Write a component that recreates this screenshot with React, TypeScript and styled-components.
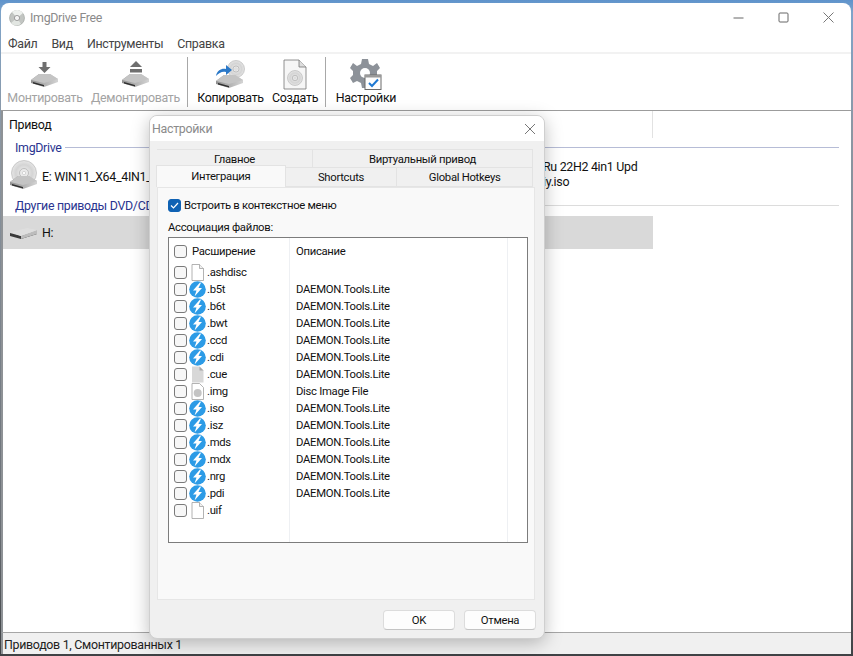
import React from "react";
import styled, { createGlobalStyle } from "styled-components";

const Global = createGlobalStyle`
  html, body { margin: 0; padding: 0; width: 853px; height: 656px; overflow: hidden; }
  body { font-family: Roboto, "Open Sans", "Liberation Sans", sans-serif; font-size: 12.4px; letter-spacing: -0.3px; color: #111; }
`;

const Desktop = styled.div`
  position: relative;
  width: 853px;
  height: 656px;
  padding: 3px 2px 2px 1px;
  box-sizing: border-box;
  background: linear-gradient(180deg, #5e93cc 0, #7fa4c9 2%, #8c97a3 20%, #6b7076 80%, #3f4245 100%);
`;
const Window = styled.div`
  height: 100%;
  display: flex;
  flex-direction: column;
  background: #fff;
  border-radius: 8px 8px 0 0;
  overflow: hidden;
`;
const TitleBar = styled.div`
  height: 29px;
  display: flex;
  align-items: center;
  padding-left: 8px;
  gap: 5px;
  color: #8b8b8b;
  flex: none;
`;
const TitleText = styled.span`
  font-size: 12.4px;
`;
const WinButtons = styled.div`
  margin-left: auto;
  display: flex;
  align-items: center;
`;
const WinButton = styled.div`
  width: 45px;
  height: 29px;
  display: flex;
  align-items: center;
  justify-content: center;
`;
const MenuBar = styled.div`
  height: 18px;
  padding: 2px 0 0 7px;
  display: flex;
  align-items: center;
  gap: 14px;
  flex: none;
  color: #444;
  border-bottom: 2px solid #f2f2f2;
`;
const Toolbar = styled.div`
  height: 56px;
  display: flex;
  align-items: stretch;
  padding-left: 2px;
  flex: none;
  border-bottom: 1px solid #9c9c9c;
`;
const ToolButton = styled.div<{ $w: number; $off?: boolean }>`
  width: ${(p) => p.$w}px;
  display: flex;
  flex-direction: column;
  align-items: center;
  justify-content: flex-end;
  padding-bottom: 5px;
  color: ${(p) => (p.$off ? "#a3a3a3" : "#111")};
  white-space: nowrap;
`;
const ToolIcon = styled.div`
  height: 32px;
  display: flex;
  align-items: center;
  justify-content: center;
`;
const ToolSep = styled.div`
  width: 1px;
  background: #a8a8a8;
  margin: 3px 5px 3px 3px;
`;
const ListArea = styled.div`
  flex: 1;
  min-height: 0;
  display: flex;
  flex-direction: column;
  border-left: 2px solid #8e9296;
  background: #fff;
`;
const ListHeader = styled.div`
  height: 27px;
  width: 650px;
  box-sizing: border-box;
  padding: 0 0 0 6px;
  display: flex;
  align-items: center;
  border-right: 1px solid #e2e2e2;
  flex: none;
`;
const GroupRow = styled.div<{ $line: string }>`
  display: flex;
  align-items: center;
  height: 18px;
  padding-left: 12px;
  margin-right: 12px;
  color: #2a3590;
  gap: 3px;
  &::after {
    content: "";
    flex: 1;
    height: 1px;
    background: ${(p) => p.$line};
  }
`;
const DriveRow = styled.div<{ $sel?: boolean; $h: number }>`
  width: 650px;
  height: ${(p) => p.$h}px;
  margin-top: ${(p) => (p.$sel ? 2 : 0)}px;
  display: flex;
  align-items: center;
  padding-left: 6px;
  box-sizing: border-box;
  gap: 3px;
  background: ${(p) => (p.$sel ? "#d9d9d9" : "transparent")};
`;
const DriveName = styled.span`
  white-space: nowrap;
  flex: none;
  width: 498px;
`;
const DriveExtra = styled.div`
  line-height: 15px;
  margin-top: -5px;
  white-space: nowrap;
`;
const StatusBar = styled.div`
  height: 22px;
  flex: none;
  background: #f0f0f0;
  border-top: 1px solid #a6a6a6;
  border-left: 2px solid #8e9296;
  padding: 1px 0 0 1px;
  box-sizing: border-box;
  display: flex;
  align-items: center;
  color: #222;
`;

const Dialog = styled.div`
  position: absolute;
  left: 149px;
  top: 115px;
  width: 396px;
  height: 524px;
  display: flex;
  flex-direction: column;
  background: #f0f0f0;
  border-radius: 8px;
  overflow: hidden;
  border: 1px solid #cfcfcf;
  box-sizing: border-box;
  box-shadow: 0 4px 18px rgba(0, 0, 0, 0.26);
  font-size: 11.3px;
`;
const DialogTitle = styled.div`
  height: 25px;
  flex: none;
  background: #fff;
  display: flex;
  align-items: center;
  padding: 0 8px 0 2px;
  color: #8b8b8b;
  justify-content: space-between;
  font-size: 12.4px;
`;
const DialogBody = styled.div`
  flex: 1;
  min-height: 0;
  display: flex;
  flex-direction: column;
  padding: 8px 9px 8px 6px;
`;
const TabRow = styled.div<{ $front?: boolean }>`
  display: flex;
  height: ${(p) => (p.$front ? 20 : 18)}px;
  padding-left: ${(p) => (p.$front ? 0 : 1)}px;
  margin-right: 2px;
  flex: none;
`;
const Tab = styled.div<{ $w: number; $active?: boolean }>`
  width: ${(p) => p.$w}px;
  box-sizing: border-box;
  display: flex;
  align-items: center;
  justify-content: center;
  background: ${(p) => (p.$active ? "#f9f9f9" : "#f0f0f0")};
  border: 1px solid #e3e3e3;
  border-bottom: ${(p) => (p.$active ? "none" : "1px solid #e3e3e3")};
  border-left-width: ${(p) => (p.$active ? 1 : 0)}px;
  position: relative;
  top: ${(p) => (p.$active ? -2 : 0)}px;
  height: ${(p) => (p.$active ? 22 : 20)}px;
  margin-bottom: -2px;
`;
const TabPanel = styled.div`
  flex: 1;
  min-height: 0;
  background: #f9f9f9;
  border: 1px solid #e6e6e6;
  margin: 0 0 0 1px;
  padding: 10px 6px 0 10px;
  display: flex;
  flex-direction: column;
`;
const CheckLine = styled.div`
  display: flex;
  align-items: center;
  gap: 3px;
  height: 15px;
`;
const Box = styled.div<{ $on?: boolean }>`
  width: 13px;
  height: 13px;
  flex: none;
  border-radius: 3px;
  border: 1px solid ${(p) => (p.$on ? "#0f62b4" : "#7a7a7a")};
  background: ${(p) => (p.$on ? "#0f62b4" : "#f7f7f7")};
  box-sizing: border-box;
  display: flex;
  align-items: center;
  justify-content: center;
`;
const FieldLabel = styled.div`
  margin-top: 7px;
  height: 16px;
  line-height: 16px;
`;
const ListBox = styled.div`
  margin-top: 1px;
  height: 306px;
  flex: none;
  box-sizing: border-box;
  background: #fff;
  border: 1px solid #7c7c7c;
  display: flex;
  flex-direction: column;
  position: relative;
`;
const ColLine = styled.div<{ $x: number }>`
  position: absolute;
  left: ${(p) => p.$x}px;
  top: 0;
  bottom: 0;
  width: 1px;
  background: #eef0f3;
`;
const HeadRow = styled.div`
  display: grid;
  grid-template-columns: 120px 1fr;
  height: 24px;
  align-items: center;
  padding-top: 1px;
  margin-bottom: 1px;
  flex: none;
`;
const ExtHead = styled.div`
  display: flex;
  align-items: center;
  gap: 5px;
  padding-left: 5px;
`;
const DescCell = styled.div`
  padding-left: 7px;
`;
const Row = styled.div`
  display: grid;
  grid-template-columns: 120px 1fr;
  height: 17px;
  align-items: center;
  flex: none;
`;
const ExtCell = styled.div`
  display: flex;
  align-items: center;
  gap: 2px;
  padding-left: 5px;
`;
const RowIcon = styled.div`
  width: 17px;
  height: 17px;
  flex: none;
  margin-right: -1px;
  display: flex;
  align-items: center;
  justify-content: center;
`;
const DialogFoot = styled.div`
  display: flex;
  justify-content: flex-end;
  gap: 9px;
  padding-top: 10px;
  margin-right: -1px;
  flex: none;
`;
const FootButton = styled.div`
  width: 72px;
  height: 20px;
  box-sizing: border-box;
  background: #fdfdfd;
  border: 1px solid #dcdcdc;
  border-bottom-color: #c4c4c4;
  border-radius: 4px;
  display: flex;
  align-items: center;
  justify-content: center;
`;

const Defs = () => (
  <svg width="0" height="0" style={{ position: "absolute" }}>
    <defs>
      <linearGradient id="slab" x1="0" y1="0" x2="1" y2="0">
        <stop offset="0" stopColor="#8f8f8f" />
        <stop offset="1" stopColor="#d4d4d4" />
      </linearGradient>
      <radialGradient id="disc" cx="0.5" cy="0.5" r="0.55">
        <stop offset="0" stopColor="#f6f6f6" />
        <stop offset="0.6" stopColor="#d4d4d4" />
        <stop offset="1" stopColor="#ececec" />
      </radialGradient>
    </defs>
  </svg>
);

const Slab = ({ y = 0 }: { y?: number }) => (
  <g transform={`translate(0 ${y})`}>
    <path d="M1 7 L9 1 H20 L28 6 V9 L14 14 L1 10 Z" fill="url(#slab)" />
    <path d="M1 7 L9 1 H20 L28 6 L14 10 Z" fill="#c4c4c4" />
    <path d="M3 9 L14 12 V13.5 L3 10.5 Z" fill="#2f2f2f" />
  </g>
);

const Disc = ({ cx, cy, r }: { cx: number; cy: number; r: number }) => (
  <g>
    <circle cx={cx} cy={cy} r={r} fill="url(#disc)" stroke="#b0b0b0" strokeWidth="0.6" />
    <circle cx={cx} cy={cy} r={r * 0.36} fill="#eaeaea" stroke="#a2a2a2" strokeWidth="0.6" />
    <circle cx={cx} cy={cy} r={r * 0.13} fill="#fff" stroke="#aaa" strokeWidth="0.4" />
  </g>
);

const MountIcon = () => (
  <svg width="30" height="28" viewBox="0 0 30 28">
    <path d="M12.5 2 H16.5 V7 H20.5 L14.5 13 L8.5 7 H12.5 Z" fill="#6f6f6f" />
    <Slab y={13} />
  </svg>
);
const EjectIcon = () => (
  <svg width="30" height="28" viewBox="0 0 30 28">
    <path d="M15 1 L21 7 H9 Z" fill="#6f6f6f" />
    <rect x="9" y="9" width="12" height="3.5" fill="#6f6f6f" />
    <Slab y={13} />
  </svg>
);
const CopyIcon = () => (
  <svg width="32" height="29" viewBox="0 0 32 29">
    <Disc cx={21} cy={9} r={8.5} />
    <Slab y={14} />
    <path d="M1 16 C2 10 7 8 11 9 V5 L17 10 L11 15 V12 C7 11 4 13 1 16 Z" fill="#2a78c8" />
  </svg>
);
const CreateIcon = () => (
  <svg width="24" height="31" viewBox="0 0 24 31">
    <path d="M1 1 H16 L23 8 V30 H1 Z" fill="#f6f6f6" stroke="#777" strokeWidth="0.8" />
    <path d="M16 1 V8 H23" fill="#ddd" stroke="#777" strokeWidth="0.8" />
    <Disc cx={12} cy={19} r={7.5} />
  </svg>
);
const SettingsIcon = () => (
  <svg width="32" height="32" viewBox="0 0 32 32">
    <path
      d="M12 1 H18 L19 6 L23 8 L27 5 L30 10 L27 13 V17 L30 20 L27 25 L23 23 L19 25 L18 30 H12 L11 25 L7 23 L3 25 L0 20 L3 17 V13 L0 10 L3 5 L7 8 L11 6 Z"
      fill="#8d9299"
    />
    <circle cx="15" cy="15" r="5" fill="#fff" />
    <rect x="15" y="17" width="16" height="14.5" fill="#fdfdfd" stroke="#6a6a6a" strokeWidth="1" />
    <rect x="15" y="17" width="16" height="2.5" fill="#9a9a9a" />
    <path d="M19 25 L22 28 L28 21.5" stroke="#1e78d2" strokeWidth="2" fill="none" />
  </svg>
);
const AppIcon = () => (
  <svg width="16" height="16" viewBox="0 0 16 16">
    <circle cx="8" cy="8" r="7.5" fill="#c2c5c2" stroke="#9aa09a" strokeWidth="0.6" />
    <path d="M8 8 L3 2 A7.5 7.5 0 0 1 14 3 Z" fill="#eef1ee" />
    <path d="M8 8 L2 13 A7.5 7.5 0 0 0 12 14 Z" fill="#e2e6e2" />
    <circle cx="8" cy="8" r="2.6" fill="#f4f4f4" stroke="#7f7f7f" strokeWidth="0.7" />
  </svg>
);
const BigDiscDrive = () => (
  <svg width="30" height="32" viewBox="0 0 30 32">
    <Disc cx={15} cy={13} r={12.5} />
    <Slab y={15} />
  </svg>
);
const FlatDrive = () => (
  <svg width="30" height="16" viewBox="0 0 30 16">
    <path d="M1 8 L12 11 L28 6 V9 L12 14 L1 11 Z" fill="#3a3a3a" />
    <path d="M12 11 L28 5 V9 L12 14 Z" fill="#bcbcbc" />
    <path d="M1 7 L18 3 L28 5 L12 11 Z" fill="#dedede" />
  </svg>
);

const FileIcon = () => (
  <svg width="13" height="17" viewBox="0 0 13 17">
    <path d="M1 .5 H8.5 L12.5 4.5 V16.5 H1 Z" fill="#fff" stroke="#a0a0a0" strokeWidth="0.8" />
    <path d="M8.5 .5 V4.5 H12.5" fill="#f0f0f0" stroke="#a0a0a0" strokeWidth="0.8" />
  </svg>
);
const GrayFileIcon = () => (
  <svg width="13" height="17" viewBox="0 0 13 17">
    <path d="M1 .5 H8.5 L12.5 4.5 V16.5 H1 Z" fill="#d8d8d8" />
    <path d="M8.5 .5 V4.5 H12.5 Z" fill="#a8a8a8" />
  </svg>
);
const ImgFileIcon = () => (
  <svg width="13" height="17" viewBox="0 0 13 17">
    <path d="M1 .5 H8.5 L12.5 4.5 V16.5 H1 Z" fill="#fff" stroke="#a0a0a0" strokeWidth="0.8" />
    <circle cx="6.7" cy="10" r="4" fill="#c4c4c4" />
  </svg>
);
const DaemonIcon = () => (
  <svg width="17" height="17" viewBox="0 0 17 17">
    <circle cx="8.5" cy="8.5" r="8.3" fill="#2c9be6" />
    <path d="M11 1.5 L4 9.5 H7.5 L5.5 15.5 L13 7 H9.5 L12 1.8 Z" fill="#fff" />
  </svg>
);

type Kind = "file" | "daemon" | "gray" | "img";
const icons: Record<Kind, React.FC> = {
  file: FileIcon,
  daemon: DaemonIcon,
  gray: GrayFileIcon,
  img: ImgFileIcon,
};

const DT = "DAEMON.Tools.Lite";
const rows: { ext: string; kind: Kind; desc: string }[] = [
  { ext: ".ashdisc", kind: "file", desc: "" },
  { ext: ".b5t", kind: "daemon", desc: DT },
  { ext: ".b6t", kind: "daemon", desc: DT },
  { ext: ".bwt", kind: "daemon", desc: DT },
  { ext: ".ccd", kind: "daemon", desc: DT },
  { ext: ".cdi", kind: "daemon", desc: DT },
  { ext: ".cue", kind: "gray", desc: DT },
  { ext: ".img", kind: "img", desc: "Disc Image File" },
  { ext: ".iso", kind: "daemon", desc: DT },
  { ext: ".isz", kind: "daemon", desc: DT },
  { ext: ".mds", kind: "daemon", desc: DT },
  { ext: ".mdx", kind: "daemon", desc: DT },
  { ext: ".nrg", kind: "daemon", desc: DT },
  { ext: ".pdi", kind: "daemon", desc: DT },
  { ext: ".uif", kind: "file", desc: "" },
];

const App: React.FC = () => {
  return (
    <Desktop>
      <Global />
      <Defs />
      <Window>
        <TitleBar>
          <AppIcon />
          <TitleText>ImgDrive Free</TitleText>
          <WinButtons>
            <WinButton>
              <svg width="11" height="11" viewBox="0 0 11 11">
                <path d="M0.5 6 H10.5" stroke="#666" strokeWidth="1" />
              </svg>
            </WinButton>
            <WinButton>
              <svg width="11" height="11" viewBox="0 0 11 11">
                <rect x="1" y="1" width="9" height="9" rx="1" fill="none" stroke="#666" strokeWidth="1" />
              </svg>
            </WinButton>
            <WinButton>
              <svg width="11" height="11" viewBox="0 0 11 11">
                <path d="M0.5 0.5 L10.5 10.5 M10.5 0.5 L0.5 10.5" stroke="#777" strokeWidth="1" />
              </svg>
            </WinButton>
          </WinButtons>
        </TitleBar>
        <MenuBar>
          <span>Файл</span>
          <span>Вид</span>
          <span>Инструменты</span>
          <span>Справка</span>
        </MenuBar>
        <Toolbar>
          <ToolButton $w={84} $off>
            <ToolIcon>
              <MountIcon />
            </ToolIcon>
            Монтировать
          </ToolButton>
          <ToolButton $w={97} $off>
            <ToolIcon>
              <EjectIcon />
            </ToolIcon>
            Демонтировать
          </ToolButton>
          <ToolSep />
          <ToolButton $w={75}>
            <ToolIcon>
              <CopyIcon />
            </ToolIcon>
            Копировать
          </ToolButton>
          <ToolButton $w={54}>
            <ToolIcon>
              <CreateIcon />
            </ToolIcon>
            Создать
          </ToolButton>
          <ToolSep />
          <ToolButton $w={70}>
            <ToolIcon>
              <SettingsIcon />
            </ToolIcon>
            Настройки
          </ToolButton>
        </Toolbar>
        <ListArea>
          <ListHeader>Привод</ListHeader>
          <GroupRow $line="#b6bcd6">ImgDrive</GroupRow>
          <DriveRow $h={40}>
            <BigDiscDrive />
            <DriveName>E: WIN11_X64_4IN1_C</DriveName>
            <DriveExtra>
              Ru 22H2 4in1 Upd
              <br />
              iy.iso
            </DriveExtra>
          </DriveRow>
          <GroupRow $line="#dcdcdc">Другие приводы DVD/CD</GroupRow>
          <DriveRow $h={33} $sel>
            <FlatDrive />
            <DriveName>H:</DriveName>
          </DriveRow>
        </ListArea>
        <StatusBar>Приводов 1, Смонтированных 1</StatusBar>
      </Window>
      <Dialog>
        <DialogTitle>
          Настройки
          <svg width="12" height="12" viewBox="0 0 12 12">
            <path d="M1 1 L11 11 M11 1 L1 11" stroke="#777" strokeWidth="1" />
          </svg>
        </DialogTitle>
        <DialogBody>
          <TabRow>
            <Tab $w={156}>Главное</Tab>
            <Tab $w={220}>Виртуальный привод</Tab>
          </TabRow>
          <TabRow $front>
            <Tab $w={130} $active>
              Интеграция
            </Tab>
            <Tab $w={112}>Shortcuts</Tab>
            <Tab $w={136}>Global Hotkeys</Tab>
          </TabRow>
          <TabPanel>
            <CheckLine>
              <Box $on>
                <svg width="9" height="9" viewBox="0 0 9 9">
                  <path d="M1 4.5 L3.5 7 L8 2" stroke="#fff" strokeWidth="1.2" fill="none" />
                </svg>
              </Box>
              Встроить в контекстное меню
            </CheckLine>
            <FieldLabel>Ассоциация файлов:</FieldLabel>
            <ListBox>
              <ColLine $x={120} />
              <ColLine $x={338} />
              <HeadRow>
                <ExtHead>
                  <Box />
                  Расширение
                </ExtHead>
                <DescCell>Описание</DescCell>
              </HeadRow>
              {rows.map((r) => {
                const Icon = icons[r.kind];
                return (
                  <Row key={r.ext}>
                    <ExtCell>
                      <Box />
                      <RowIcon>
                        <Icon />
                      </RowIcon>
                      {r.ext}
                    </ExtCell>
                    <DescCell>{r.desc}</DescCell>
                  </Row>
                );
              })}
            </ListBox>
          </TabPanel>
          <DialogFoot>
            <FootButton>OK</FootButton>
            <FootButton>Отмена</FootButton>
          </DialogFoot>
        </DialogBody>
      </Dialog>
    </Desktop>
  );
};

export default App;
